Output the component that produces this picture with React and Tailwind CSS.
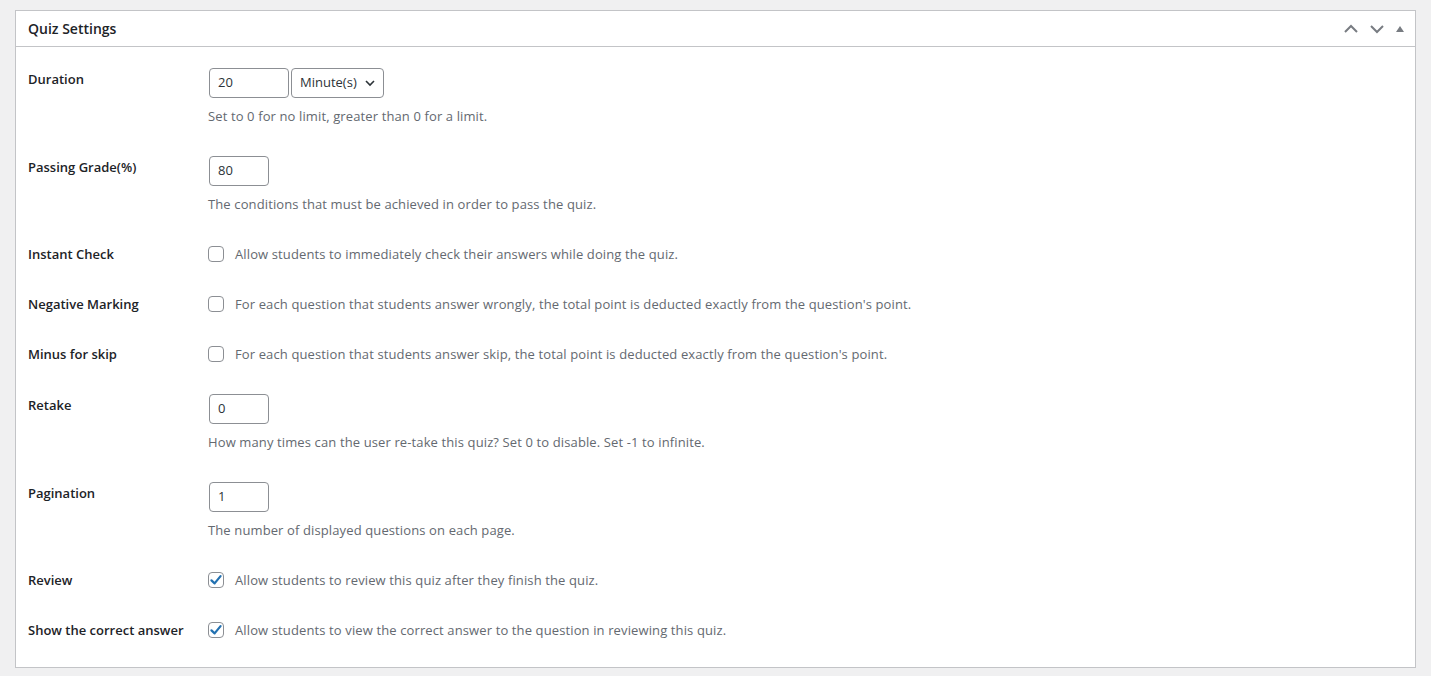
import React from "react";

const font = { fontFamily: '"Segoe UI", "Open Sans", "Liberation Sans", Arial, sans-serif' };

function Check({ checked }) {
  return (
    <span className="flex h-4 w-4 shrink-0 items-center justify-center rounded-[4px] border border-[#8c8f94] bg-white">
      {checked && (
        <svg width="14" height="14" viewBox="0 0 20 20">
          <path d="M3.5 10.5 L8 14.8 L16.5 4.5" fill="none" stroke="#2271b1" strokeWidth="3.2" strokeLinecap="round" strokeLinejoin="round" />
        </svg>
      )}
    </span>
  );
}

function InputRow({ label, value, desc, children }) {
  return (
    <div className="flex items-start">
      <div className="w-[180px] shrink-0 pt-px text-[13px] font-semibold leading-5 text-[#1d2327]">{label}</div>
      <div className="flex flex-col">
        <div className="flex gap-[2px] pl-px">
          <div className="flex h-[30px] w-[60px] items-center rounded-[4px] border border-[#8c8f94] px-[8px] text-[13px] text-[#2c3338]">{value}</div>
          {children}
        </div>
        <div className="mt-2 text-[13px] leading-5 tracking-[0.12px] text-[#646970]">{desc}</div>
      </div>
    </div>
  );
}

function CheckRow({ label, text, checked }) {
  return (
    <div className="flex items-center">
      <div className="w-[180px] shrink-0 text-[13px] font-semibold leading-5 text-[#1d2327]">{label}</div>
      <div className="flex items-center gap-[11px]">
        <Check checked={checked} />
        <span className="text-[13px] leading-5 tracking-[0.12px] text-[#646970]">{text}</span>
      </div>
    </div>
  );
}

export default function App() {
  return (
    <div className="min-h-[676px] bg-[#f0f0f1] px-[15px] pt-[10px]" style={font}>
      <div className="border border-[#c3c4c7] bg-white">
        <div className="flex h-[36px] items-center justify-between border-b border-[#c3c4c7] pl-3 pr-[10px]">
          <span className="text-[14px] font-semibold text-[#1d2327]">Quiz Settings</span>
          <div className="flex items-center gap-[10px] text-[#787c82]">
            <svg width="16" height="16" viewBox="0 0 16 16">
              <path d="M2 11 L8 5 L14 11" fill="none" stroke="#787c82" strokeWidth="2" />
            </svg>
            <svg width="16" height="16" viewBox="0 0 16 16">
              <path d="M2 5 L8 11 L14 5" fill="none" stroke="#787c82" strokeWidth="2" />
            </svg>
            <svg width="10" height="16" viewBox="0 0 10 16">
              <path d="M1 11 L5 5 L9 11 Z" fill="#787c82" />
            </svg>
          </div>
        </div>
        <div className="flex flex-col gap-[30px] px-3 pb-[27px] pt-[21px]">
          <div className="flex items-start">
            <div className="w-[180px] shrink-0 pt-px text-[13px] font-semibold leading-5 text-[#1d2327]">Duration</div>
            <div className="flex flex-col">
              <div className="flex gap-[2px] pl-px">
                <div className="flex h-[30px] w-[80px] items-center rounded-[4px] border border-[#8c8f94] px-[8px] text-[13px] text-[#2c3338]">20</div>
                <div className="flex h-[30px] w-[93px] items-center justify-between rounded-[4px] border border-[#8c8f94] pl-[8px] pr-[7px] text-[13px] text-[#2c3338]">
                  <span>Minute(s)</span>
                  <svg width="12" height="12" viewBox="0 0 12 12">
                    <path d="M2 4 L6 8 L10 4" fill="none" stroke="#2c3338" strokeWidth="1.6" />
                  </svg>
                </div>
              </div>
              <div className="mt-2 text-[13px] leading-5 tracking-[0.12px] text-[#646970]">Set to 0 for no limit, greater than 0 for a limit.</div>
            </div>
          </div>
          <InputRow label="Passing Grade(%)" value="80" desc="The conditions that must be achieved in order to pass the quiz." />
          <CheckRow label="Instant Check" text="Allow students to immediately check their answers while doing the quiz." />
          <CheckRow label="Negative Marking" text="For each question that students answer wrongly, the total point is deducted exactly from the question's point." />
          <CheckRow label="Minus for skip" text="For each question that students answer skip, the total point is deducted exactly from the question's point." />
          <InputRow label="Retake" value="0" desc="How many times can the user re-take this quiz? Set 0 to disable. Set -1 to infinite." />
          <InputRow label="Pagination" value="1" desc="The number of displayed questions on each page." />
          <CheckRow label="Review" text="Allow students to review this quiz after they finish the quiz." checked />
          <CheckRow label="Show the correct answer" text="Allow students to view the correct answer to the question in reviewing this quiz." checked />
        </div>
      </div>
    </div>
  );
}
